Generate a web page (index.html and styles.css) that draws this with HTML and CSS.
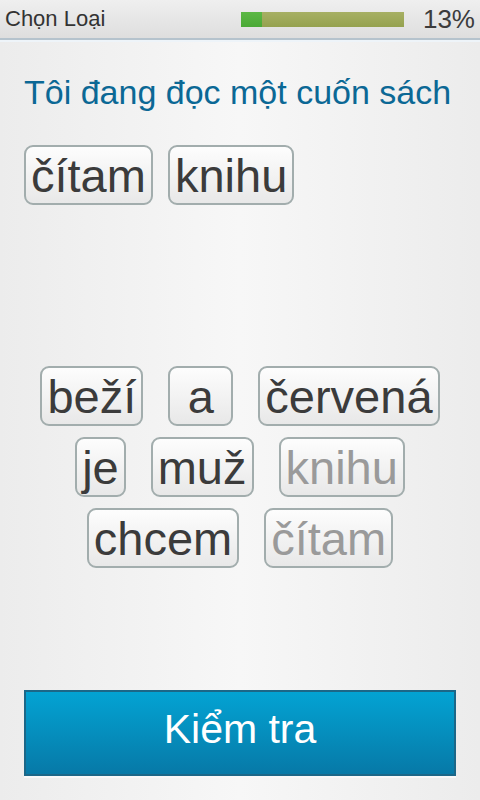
FILE: index.html
```html
<!DOCTYPE html>
<html lang="vi">

<head>
    <meta charset="UTF-8">
    <meta name="viewport" content="width=device-width, initial-scale=1.0">
    <title>Chọn Loại</title>
    <link rel="stylesheet" href="styles.css">
</head>

<body>
    <div class="screen">
        <!-- Top bar -->
        <div class="topbar">
            <span class="topbar-title">Chọn Loại</span>
            <div class="progress">
                <div class="progress-fill" style="width: 13%"></div>
            </div>
            <span class="percent">13%</span>
        </div>

        <div class="content">
            <h2 class="question">Tôi đang đọc một cuốn sách</h2>

            <!-- Chosen words -->
            <div class="answer">
                <span class="chip">čítam</span>
                <span class="chip">knihu</span>
            </div>

            <!-- Word bank -->
            <div class="bank">
                <div class="bank-row">
                    <span class="chip">beží</span>
                    <span class="chip chip-short">a</span>
                    <span class="chip">červená</span>
                </div>
                <div class="bank-row">
                    <span class="chip">je</span>
                    <span class="chip">muž</span>
                    <span class="chip used">knihu</span>
                </div>
                <div class="bank-row">
                    <span class="chip">chcem</span>
                    <span class="chip used">čítam</span>
                </div>
            </div>

            <button class="check" type="button">Kiểm tra</button>
        </div>
    </div>
</body>

</html>
```

FILE: styles.css
```css
body {
    margin: 0;
    font-family: "Liberation Sans", Arial, sans-serif;
    background-color: #f1f1f1;
}

.screen {
    display: flex;
    flex-direction: column;
    height: 100vh;
    background: linear-gradient(to right, #ececec, #f7f7f7 50%, #ececec);
}

.topbar {
    display: flex;
    align-items: center;
    height: 38px;
    padding: 0 5px;
    background: linear-gradient(#efefef, #dedede);
    border-bottom: 2px solid #b5c3cd;
    box-shadow: 0 2px 0 #eef4f9;
}

.topbar-title {
    font-size: 22px;
    color: #333;
    flex: 1;
}

.progress {
    width: 163px;
    height: 15px;
    background: linear-gradient(#a7b064, #95a24f);
    margin-right: 19px;
}

.progress-fill {
    height: 100%;
    background: linear-gradient(#5cb845, #4aa936);
}

.percent {
    font-size: 26px;
    color: #3c3c3c;
}

.content {
    flex: 1;
    display: flex;
    flex-direction: column;
    padding: 0 24px 24px;
}

.question {
    margin: 32px 0 0;
    font-size: 34px;
    line-height: 40px;
    font-weight: normal;
    color: #0b6895;
    white-space: nowrap;
}

.answer {
    display: flex;
    gap: 15px;
    margin-top: 33px;
    height: 221px;
    align-items: flex-start;
}

.bank {
    display: flex;
    flex-direction: column;
    gap: 11px;
    margin: 0 -24px;
}

.bank-row {
    display: flex;
    justify-content: center;
    gap: 25px;
}

.chip {
    display: inline-block;
    height: 56px;
    line-height: 58px;
    padding: 0 5px;
    font-size: 47px;
    color: #3b3b3b;
    text-align: center;
    border: 2px solid #a2adad;
    border-radius: 9px;
    background: linear-gradient(#fdfdfd, #e8e8e8);
}

.chip-short {
    min-width: 51px;
}

.chip.used {
    color: #9a9a9a;
}

.check {
    margin-top: auto;
    height: 86px;
    padding: 0 0 8px;
    font-family: inherit;
    font-size: 41px;
    color: #fff;
    border: 2px solid #1c6788;
    background: linear-gradient(#03a3d3, #0779a7);
    box-shadow: 0 2px 0 #f8f8f8;
    cursor: pointer;
}
```
